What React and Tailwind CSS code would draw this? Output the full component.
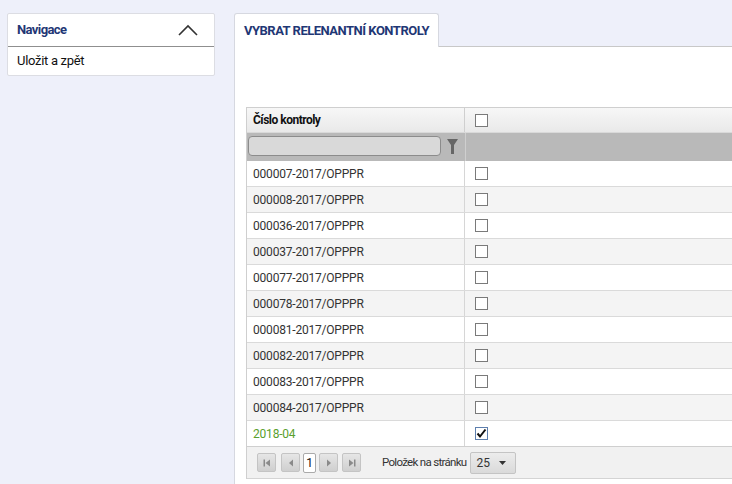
import React from "react";

const rows = [
  "000007-2017/OPPPR",
  "000008-2017/OPPPR",
  "000036-2017/OPPPR",
  "000037-2017/OPPPR",
  "000077-2017/OPPPR",
  "000078-2017/OPPPR",
  "000081-2017/OPPPR",
  "000082-2017/OPPPR",
  "000083-2017/OPPPR",
  "000084-2017/OPPPR",
];

function Box({ checked }) {
  return (
    <div
      className={`w-[13px] h-[13px] border bg-white flex items-center justify-center ${
        checked ? "border-[#5d7fae]" : "border-[#7a7a7a]"
      }`}
    >
      {checked && (
        <svg width="11" height="11" viewBox="0 0 11 11">
          <path d="M1.5 5.5 L4 8.5 L9.5 1.5" stroke="#111" strokeWidth="2" fill="none" />
        </svg>
      )}
    </div>
  );
}

function PagerBtn({ children }) {
  return (
    <div className="w-[19px] h-[19px] rounded-[2px] border border-[#c4c4c4] bg-gradient-to-b from-[#e6e6e6] to-[#cfcfcf] flex items-center justify-center">
      {children}
    </div>
  );
}

export default function App() {
  return (
    <div
      className="w-[732px] h-[484px] overflow-hidden bg-[#eef0fa] flex items-start text-[#222]"
      style={{ fontFamily: "Roboto, 'Liberation Sans', sans-serif" }}
    >
      {/* left nav */}
      <div className="ml-[7px] mt-[13px] w-[208px] bg-white border border-[#dcdde3] rounded-[2px]">
        <div className="h-[33px] flex items-center justify-between pl-[9px] pr-[16px] border-b border-[#8f8f8f]">
          <span className="text-[13px] font-bold text-[#1f3775] tracking-[-0.6px]">Navigace</span>
          <svg width="20" height="12" viewBox="0 0 20 12">
            <path d="M1 11 L10 2 L19 11" stroke="#333" strokeWidth="1.6" fill="none" />
          </svg>
        </div>
        <div className="h-[28px] flex items-center pl-[9px] text-[13px] text-[#111] tracking-[-0.3px]">
          Uložit a zpět
        </div>
      </div>

      {/* main */}
      <div className="ml-[19px] mt-[13px] flex-1 flex flex-col">
        <div className="flex">
          <div className="h-[34px] w-[205px] bg-white border border-[#d6d8e0] border-b-0 rounded-t-[3px] flex items-center pl-[9px]">
            <span className="text-[13px] font-bold text-[#1f3775] tracking-[-0.5px]">
              VYBRAT RELENANTNÍ KONTROLY
            </span>
          </div>
          <div className="flex-1 border-b border-[#c8c8c8]" />
        </div>
        <div className="bg-white border-l border-[#d6d8e0] h-[440px] pl-[11px] pt-[60px]">
          <div className="border-l border-t border-[#cfcfcf]">
            {/* header */}
            <div className="h-[25px] flex bg-gradient-to-b from-[#f7f7f7] to-[#e9e9e9] border-b border-[#d9d9d9]">
              <div className="w-[218px] border-r border-[#cfcfcf] flex items-center pl-[6px]">
                <span className="text-[12px] font-bold text-[#111] tracking-[-0.5px]">Číslo kontroly</span>
              </div>
              <div className="flex-1 flex items-center pl-[10px]">
                <Box />
              </div>
            </div>
            {/* filter */}
            <div className="h-[28px] flex bg-[#b9b9b9]">
              <div className="w-[218px] flex items-start pt-[3px] pl-[1px] gap-[6px]">
                <div className="w-[193px] h-[20px] rounded-[4px] border border-[#8c8c8c] bg-[#d9d9d9]" />
                <svg width="11" height="15" viewBox="0 0 11 15" className="mt-[3px]">
                  <path d="M0 0 H11 L7 6 V15 H4 V6 Z" fill="#666" />
                </svg>
              </div>
              <div className="flex-1 border-l border-[#cfcfcf]" />
            </div>
            {/* rows */}
            {rows.map((r, i) => (
              <div
                key={r}
                className={`h-[26px] flex border-b border-[#dadada] ${i % 2 === 1 ? "bg-[#f4f4f4]" : "bg-white"}`}
              >
                <div className="w-[218px] border-r border-[#d6d6d6] flex items-center pl-[6px] text-[12px] text-[#333] tracking-[-0.2px]">
                  {r}
                </div>
                <div className="flex-1 flex items-center pl-[10px]">
                  <Box />
                </div>
              </div>
            ))}
            <div className="h-[26px] flex border-b border-[#cfcfcf] bg-white">
              <div className="w-[218px] border-r border-[#d6d6d6] flex items-center pl-[6px] text-[12px] text-[#5aa02c] tracking-[-0.2px]">
                2018-04
              </div>
              <div className="flex-1 flex items-center pl-[10px]">
                <Box checked />
              </div>
            </div>
            {/* pager */}
            <div className="h-[32px] bg-[#f1f1f1] border-b border-[#d4d4d4] flex items-center pl-[10px]">
              <PagerBtn>
                <svg width="8" height="8" viewBox="0 0 8 8">
                  <rect x="0.5" y="0.5" width="1.5" height="7" fill="#8a8a8a" />
                  <path d="M7 0.5 V7.5 L2.5 4 Z" fill="#8a8a8a" />
                </svg>
              </PagerBtn>
              <div className="w-[5px]" />
              <PagerBtn>
                <svg width="6" height="8" viewBox="0 0 6 8">
                  <path d="M5 0.5 V7.5 L1 4 Z" fill="#8a8a8a" />
                </svg>
              </PagerBtn>
              <div className="w-[13px] h-[20px] mx-[3px] bg-white border border-[#aaa] rounded-[2px] flex items-center justify-center text-[12px] text-[#111]">
                1
              </div>
              <PagerBtn>
                <svg width="6" height="8" viewBox="0 0 6 8">
                  <path d="M1 0.5 V7.5 L5 4 Z" fill="#8a8a8a" />
                </svg>
              </PagerBtn>
              <div className="w-[4px]" />
              <PagerBtn>
                <svg width="8" height="8" viewBox="0 0 8 8">
                  <path d="M1 0.5 V7.5 L5.5 4 Z" fill="#8a8a8a" />
                  <rect x="6" y="0.5" width="1.5" height="7" fill="#8a8a8a" />
                </svg>
              </PagerBtn>
              <span className="ml-[21px] text-[11.5px] text-[#333] tracking-[-0.7px]">Položek na stránku</span>
              <div className="ml-[4px] w-[46px] h-[22px] rounded-[2px] border border-[#c4c4c4] bg-gradient-to-b from-[#ececec] to-[#dadada] flex items-center justify-between pl-[5px] pr-[9px]">
                <span className="text-[12px] text-[#333]">25</span>
                <svg width="7" height="4" viewBox="0 0 7 4">
                  <path d="M0 0 H7 L3.5 4 Z" fill="#333" />
                </svg>
              </div>
            </div>
          </div>
        </div>
      </div>
    </div>
  );
}
